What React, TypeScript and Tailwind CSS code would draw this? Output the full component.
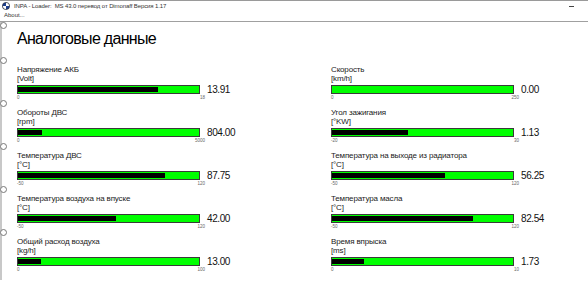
type Gauge = {
	label: string;
	unit: string;
	min: string;
	max: string;
	value: string;
	fill: number;
};

const left: Gauge[] = [
	{ label: 'Напряжение АКБ', unit: '[Volt]', min: '0', max: '18', value: '13.91', fill: 0.773 },
	{ label: 'Обороты ДВС', unit: '[rpm]', min: '0', max: '5000', value: '804.00', fill: 0.13 },
	{ label: 'Температура ДВС', unit: '[°C]', min: '-50', max: '120', value: '87.75', fill: 0.81 },
	{ label: 'Температура воздуха на впуске', unit: '[°C]', min: '-50', max: '120', value: '42.00', fill: 0.54 },
	{ label: 'Общий расход воздуха', unit: '[kg/h]', min: '0', max: '100', value: '13.00', fill: 0.126 },
];

const right: Gauge[] = [
	{ label: 'Скорость', unit: '[km/h]', min: '0', max: '250', value: '0.00', fill: 0 },
	{ label: 'Угол зажигания', unit: '[°KW]', min: '-20', max: '30', value: '1.13', fill: 0.42 },
	{ label: 'Температура на выходе из радиатора', unit: '[°C]', min: '-50', max: '120', value: '56.25', fill: 0.625 },
	{ label: 'Температура масла', unit: '[°C]', min: '-50', max: '120', value: '82.54', fill: 0.78 },
	{ label: 'Время впрыска', unit: '[ms]', min: '0', max: '10', value: '1.73', fill: 0.175 },
];

function GaugeRow({ g }: { g: Gauge }) {
	return (
		<div className="h-[43px]">
			<div className="text-[8px] leading-[9px] tracking-[-0.15px] text-[#222]">{g.label}</div>
			<div className="text-[8px] leading-[9px] tracking-[-0.15px] text-[#222]">{g.unit}</div>
			<div className="mt-px flex items-center gap-[7px]">
				<div className="h-[9px] w-[183px] border border-[#3a3a3a] bg-[#00ff00] py-px">
					<div className="h-full bg-black" style={{ width: `${g.fill * 100}%` }}></div>
				</div>
				<span className="text-[10px] leading-[11px] tracking-[-0.4px] text-[#111]">{g.value}</span>
			</div>
			<div className="flex w-[188px] justify-between text-[4.5px] leading-[6px] text-[#666]">
				<span>{g.min}</span>
				<span>{g.max}</span>
			</div>
		</div>
	);
}

function Radio({ className }: { className: string }) {
	return <div className={`h-[7px] w-[7px] rounded-full border border-[#777] bg-white ${className}`}></div>;
}

export default function App() {
	return (
		<div
			className="h-[290px] w-[588px] overflow-hidden bg-white"
			style={{ fontFamily: '"Liberation Sans", Arial, sans-serif' }}
		>
			<div className="flex h-[11px] items-center border-t border-[#9a9a9a] pl-[2px]">
				<svg width="8" height="8" viewBox="0 0 8 8">
					<circle cx="4" cy="4" r="3.6" fill="#1d3f8f" />
					<path d="M4 0.6 A3.4 3.4 0 0 1 7.4 4 L4 4 Z" fill="#ffffff" />
					<path d="M4 7.4 A3.4 3.4 0 0 1 0.6 4 L4 4 Z" fill="#ffffff" />
					<circle cx="4" cy="4" r="3.6" fill="none" stroke="#222" strokeWidth="0.6" />
				</svg>
				<span className="ml-[4px] text-[6px] leading-[8px] tracking-[-0.1px] text-[#333]">
					INPA - Loader:&nbsp; MS 43.0 перевод от Dimonaff Версия 1.17
				</span>
				<span className="ml-auto mr-[14px] h-px w-[5px] bg-[#444]"></span>
			</div>
			<div className="h-[10px] pl-[4px] text-[6px] leading-[9px] text-[#333]">About...</div>
			<div className="flex border-t border-[#a0a0a0]">
				<div className="flex w-[8px] shrink-0 flex-col items-center border-l-2 border-[#c8c8c8]">
					<Radio className="mt-[0px] -ml-[3px]" />
					<Radio className="mt-[28px] -ml-[3px]" />
					<Radio className="mt-[36px] -ml-[3px]" />
					<Radio className="mt-[36px] -ml-[3px]" />
					<Radio className="mt-[36px] -ml-[3px]" />
					<Radio className="mt-[36px] -ml-[3px]" />
				</div>
				<div className="pl-[9px]">
					<h1 className="mt-[7px] h-[36px] text-[16px] leading-[20px] tracking-[-0.7px] text-black">
						Аналоговые данные
					</h1>
					<div className="grid grid-cols-[314px_260px]">
						<div>
							{left.map((g) => (
								<GaugeRow key={g.label} g={g} />
							))}
						</div>
						<div>
							{right.map((g) => (
								<GaugeRow key={g.label} g={g} />
							))}
						</div>
					</div>
				</div>
			</div>
		</div>
	);
}
